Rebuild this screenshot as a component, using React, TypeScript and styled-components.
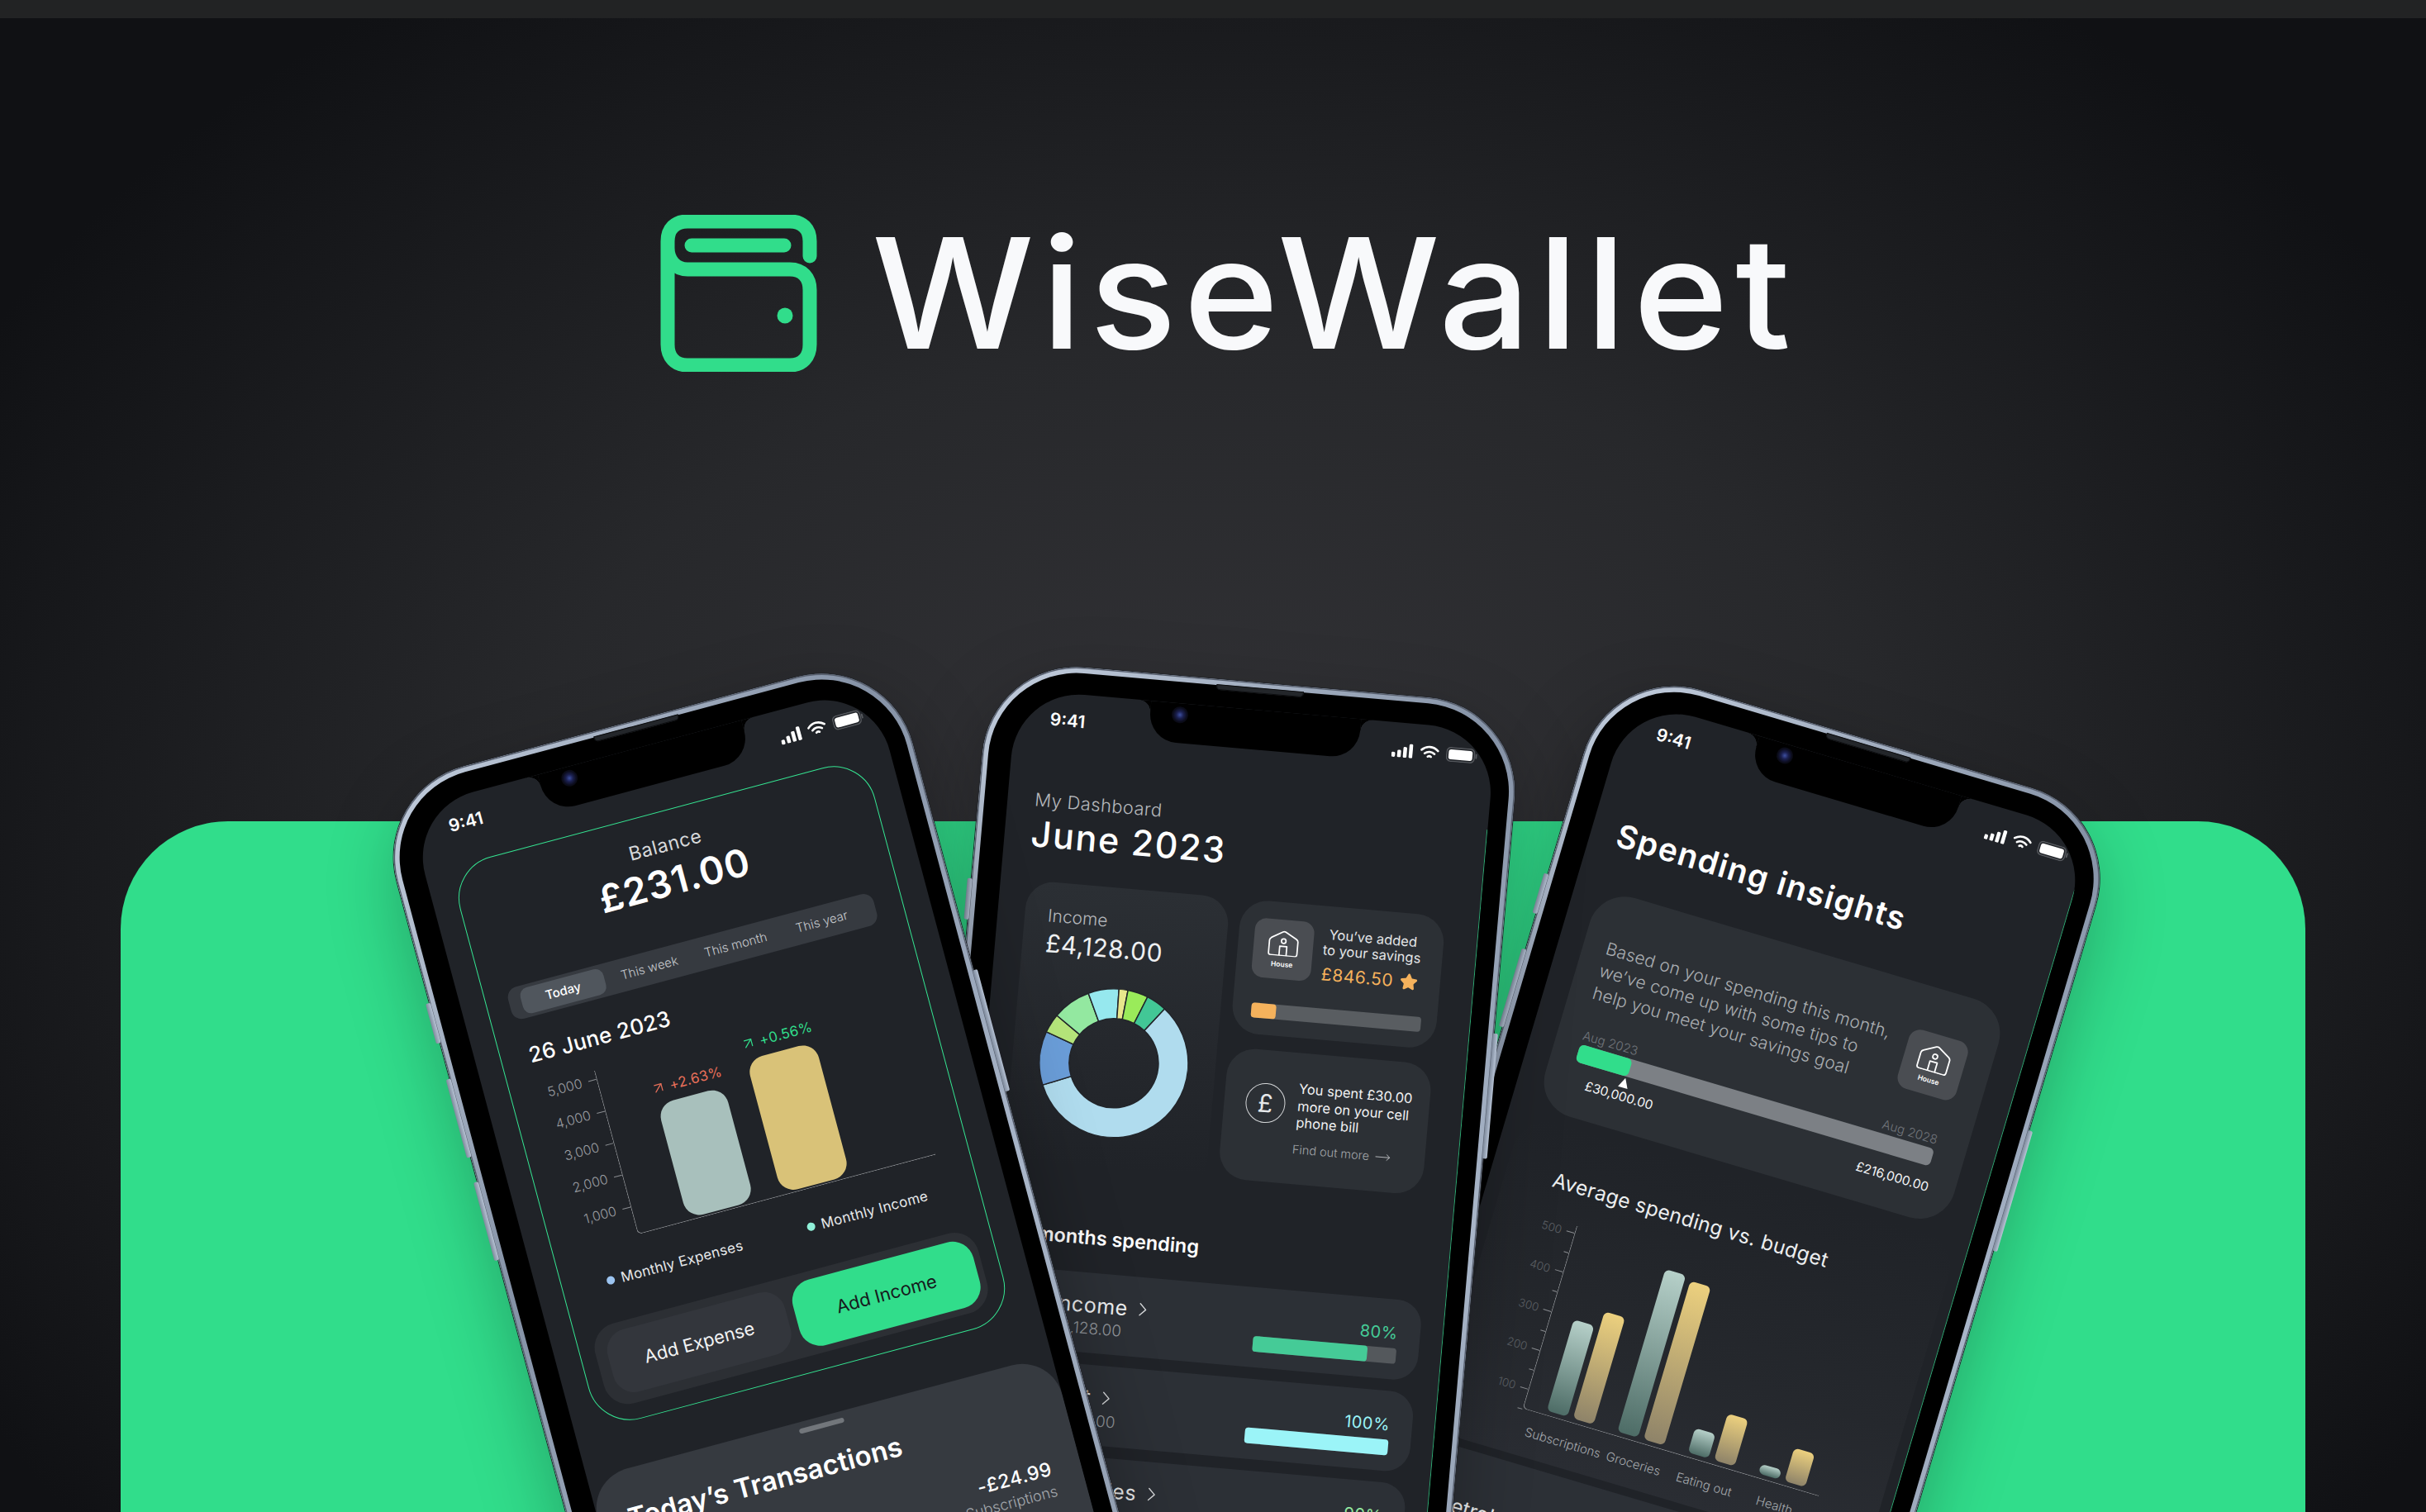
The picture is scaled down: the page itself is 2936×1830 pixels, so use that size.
import React from "react";
import styled, { createGlobalStyle } from "styled-components";
import { ArrowUpRight, ChevronRight, MoveRight, Star } from "lucide-react";

const Global = createGlobalStyle`
  html, body { margin: 0; padding: 0; background: #0f1012; }
  body { font-family: Inter, "Noto Sans", sans-serif; color: #fff; }
  * { box-sizing: border-box; }
`;

const Page = styled.div`
  position: relative;
  width: 2936px;
  height: 1830px;
  overflow: hidden;
  background: radial-gradient(ellipse 1720px 1300px at 50% 58%, #343438 0%, #27282b 50%, #101114 100%);
  display: flex;
  flex-direction: column;
`;
const TopBar = styled.div`
  height: 22px;
  background: #222324;
  flex: none;
`;
const Header = styled.header`
  display: flex;
  justify-content: center;
  align-items: center;
  gap: 66px;
  height: 190px;
  margin-top: 238px;
  padding-right: 20px;
  flex: none;
`;
const Wordmark = styled.h1`
  margin: 0;
  font: 500 186px/190px Inter, sans-serif;
  letter-spacing: 8px;
  color: #f8f9fb;
  transform: scaleX(1.055);
  transform-origin: 0 50%;
`;
const Panel = styled.div`
  flex: 1;
  margin: 544px 146px 0;
  background: #31dd8b;
  border-radius: 130px 130px 0 0;
`;

const PhoneFrame = styled.div<{ $x: number; $y: number; $angle: number; $z: number }>`
  position: absolute;
  left: ${(p) => p.$x}px;
  top: ${(p) => p.$y}px;
  z-index: ${(p) => p.$z};
  width: 646px;
  height: 1500px;
  transform-origin: 0 0;
  transform: rotate(${(p) => p.$angle}deg);
  padding: 7px;
  border-radius: 114px;
  background: linear-gradient(135deg, #c3cede 0%, #8592a6 30%, #a9b6c9 60%, #7d899b 100%);
  box-shadow: inset 0 0 0 1.5px #596170, 0 0 0 1px #23262c, 0 30px 90px rgba(0, 0, 0, 0.28);
`;
const Bezel = styled.div`
  width: 100%;
  height: 100%;
  background: #000;
  border-radius: 107px;
  padding: 26px 22px 25px 28px;
`;
const Speaker = styled.div`
  position: absolute;
  left: 275px;
  top: 6px;
  width: 106px;
  height: 7px;
  border-radius: 0 0 5px 5px;
  background: #23262a;
  box-shadow: inset 0 0 0 1px #0c0d0f;
`;
const SideButton = styled.div<{ $side: "left" | "right"; $top: number; $h: number }>`
  position: absolute;
  ${(p) => p.$side}: -5px;
  top: ${(p) => p.$top}px;
  width: 6px;
  height: ${(p) => p.$h}px;
  background: linear-gradient(90deg, #7d899b, #b7c3d5);
  border-radius: 2px;
`;
const Screen = styled.div<{ $edge?: number }>`
  position: relative;
  width: 100%;
  height: 100%;
  background: #202328;
  border-radius: 82px;
  overflow: hidden;
  display: flex;
  flex-direction: column;
  &::after {
    content: "";
    display: ${(p) => (p.$edge ? "block" : "none")};
    position: absolute;
    right: 0;
    top: ${(p) => p.$edge}px;
    bottom: 0;
    width: 1.5px;
    background: #2fd98a;
    opacity: 0.75;
  }
`;
const Notch = styled.div`
  position: absolute;
  left: 163px;
  top: 0;
  width: 255px;
  height: 48px;
  background: #000;
  border-radius: 0 0 34px 34px;
  z-index: 5;
  &::before, &::after {
    content: "";
    position: absolute;
    top: 0;
    width: 14px;
    height: 14px;
  }
  &::before {
    left: -14px;
    background: radial-gradient(circle at 0 100%, transparent 13.5px, #000 14px);
  }
  &::after {
    right: -14px;
    background: radial-gradient(circle at 100% 100%, transparent 13.5px, #000 14px);
  }
`;
const Camera = styled.div`
  position: absolute;
  left: 26px;
  top: 4px;
  width: 20px;
  height: 20px;
  border-radius: 50%;
  background: radial-gradient(circle, #3d4fa0 0%, #1b2050 30%, #0b0c1a 60%, #050507 100%);
`;
const StatusBar = styled.div`
  flex: none;
  height: 66px;
  display: flex;
  align-items: center;
  justify-content: space-between;
  padding: 0 20px 0 43px;
`;
const Time = styled.span`
  font: 600 21px/24px Inter, sans-serif;
`;
const StatusIcons = styled.div`
  display: flex;
  align-items: center;
  gap: 8px;
`;

const Status = () => (
  <StatusBar>
    <Time>9:41</Time>
    <StatusIcons>
      <svg width="26" height="18" viewBox="0 0 26 18" fill="#fff">
        <rect x="0" y="12" width="4.5" height="6" rx="1.5" />
        <rect x="7" y="9" width="4.5" height="9" rx="1.5" />
        <rect x="14" y="5" width="4.5" height="13" rx="1.5" />
        <rect x="21" y="1" width="4.5" height="17" rx="1.5" />
      </svg>
      <svg width="24" height="18" viewBox="0 0 24 18" fill="none" stroke="#fff" strokeLinecap="round" strokeWidth="2.6">
        <path d="M2 6.5C8 1 16 1 22 6.5" />
        <path d="M6 10.5C9.5 7.5 14.5 7.5 18 10.5" />
        <path d="M10 14.2C11.2 13.2 12.8 13.2 14 14.2" />
      </svg>
      <svg width="38" height="18" viewBox="0 0 38 18">
        <rect x="0.75" y="0.75" width="33.5" height="16.5" rx="5" fill="none" stroke="#55585d" strokeWidth="1.5" />
        <rect x="3" y="3" width="29" height="12" rx="3" fill="#fff" />
        <rect x="35.5" y="6" width="2" height="6" rx="1" fill="#55585d" />
      </svg>
    </StatusIcons>
  </StatusBar>
);

const Phone = ({ x, y, angle, z, edge, children }: any) => (
  <PhoneFrame $x={x} $y={y} $angle={angle} $z={z}>
    <SideButton $side="left" $top={266} $h={50} />
    <SideButton $side="left" $top={361} $h={98} />
    <SideButton $side="left" $top={490} $h={98} />
    <SideButton $side="right" $top={398} $h={152} />
    <Speaker />
    <Bezel>
      <Screen $edge={edge}>
        <Notch>
          <Camera />
        </Notch>
        <Status />
        {children}
      </Screen>
    </Bezel>
  </PhoneFrame>
);

/* left phone */
const BalanceCard = styled.section`
  flex: none;
  margin: 15px 0 0 30px;
  width: 520px;
  height: 704px;
  border: 1.5px solid #35e592;
  border-radius: 52px;
  display: flex;
  flex-direction: column;
`;
const BalanceLabel = styled.div`
  margin-top: 26px;
  text-align: center;
  font: 400 23px/28px Inter, sans-serif;
  color: #d6d8da;
  letter-spacing: 0.5px;
`;
const BalanceValue = styled.div`
  margin-top: 2px;
  text-align: center;
  font: 600 46px/56px Inter, sans-serif;
  letter-spacing: 1px;
`;
const Tabs = styled.div`
  margin: 47px 0 0 27px;
  width: 458px;
  height: 40px;
  padding: 0 13px;
  display: grid;
  grid-template-columns: repeat(4, 108px);
  align-items: center;
  justify-items: center;
  background: #363a40;
  border-radius: 13px;
`;
const Tab = styled.div<{ $active?: boolean }>`
  width: 104px;
  height: 32px;
  border-radius: 10px;
  font: ${(p) => (p.$active ? 500 : 300)} 15px/32px Inter, sans-serif;
  text-align: center;
  color: ${(p) => (p.$active ? "#fff" : "#c5c8cc")};
  background: ${(p) => (p.$active ? "#50565d" : "transparent")};
`;
const DateLine = styled.div`
  margin: 29px 0 0 34px;
  font: 500 26px/32px Inter, sans-serif;
  letter-spacing: 0.3px;
`;
const ChartRow = styled.div`
  margin: 12px 0 0 0;
  height: 215px;
  display: flex;
`;
const YAxis = styled.div<{ $w: number; $row: number }>`
  flex: none;
  width: ${(p) => p.$w}px;
  display: flex;
  flex-direction: column;
  & > div {
    height: ${(p) => p.$row}px;
  }
`;
const YTick = styled.div<{ $size: number; $color: string; $gap: number }>`
  display: flex;
  align-items: center;
  justify-content: flex-end;
  gap: ${(p) => p.$gap}px;
  font: 300 ${(p) => p.$size}px/20px Inter, sans-serif;
  color: ${(p) => p.$color};
  &::after {
    content: "";
    width: 10px;
    height: 1px;
    background: #8a8d91;
  }
`;
const Plot = styled.div<{ $top: number; $w: number; $h: number; $pad: number; $gap: number; $bottom: number }>`
  flex: none;
  margin-top: ${(p) => p.$top}px;
  width: ${(p) => p.$w}px;
  height: ${(p) => p.$h}px;
  padding: 0 0 ${(p) => p.$bottom}px ${(p) => p.$pad}px;
  border-left: 1px solid #8a8d91;
  border-bottom: 1px solid #8a8d91;
  border-bottom-left-radius: 6px;
  display: flex;
  align-items: flex-end;
  gap: ${(p) => p.$gap}px;
`;
const BarColumn = styled.div`
  display: flex;
  flex-direction: column;
  align-items: center;
  gap: 8px;
`;
const Trend = styled.div<{ $color: string }>`
  display: flex;
  align-items: center;
  gap: 4px;
  height: 22px;
  white-space: nowrap;
  font: 400 17px/22px Inter, sans-serif;
  letter-spacing: 0.3px;
  color: ${(p) => p.$color};
`;
const SolidBar = styled.div<{ $h: number; $w: number; $color: string }>`
  width: ${(p) => p.$w}px;
  height: ${(p) => p.$h}px;
  background: ${(p) => p.$color};
  border-radius: 20px;
`;
const Legend = styled.div`
  margin: 33px 0 0 54px;
  width: 402px;
  display: flex;
  justify-content: space-between;
`;
const LegendItem = styled.div<{ $color: string }>`
  display: flex;
  align-items: center;
  gap: 8px;
  font: 400 17px/24px Inter, sans-serif;
  color: #e6e8ea;
  letter-spacing: 0.3px;
  &::before {
    content: "";
    width: 10px;
    height: 10px;
    border-radius: 50%;
    background: ${(p) => p.$color};
  }
`;
const ActionBar = styled.div`
  margin: 39px 0 0 18px;
  width: 480px;
  height: 100px;
  padding: 10px 8px 10px 14px;
  background: #2c2f34;
  border-radius: 30px;
  display: flex;
  gap: 10px;
`;
const ActionButton = styled.div<{ $primary?: boolean }>`
  flex: none;
  width: ${(p) => (p.$primary ? 226 : 222)}px;
  height: ${(p) => (p.$primary ? 82 : 78)}px;
  border-radius: 26px;
  display: flex;
  align-items: center;
  justify-content: center;
  font: 400 22px/26px Inter, sans-serif;
  color: ${(p) => (p.$primary ? "#16191c" : "#f2f3f4")};
  background: ${(p) => (p.$primary ? "#31dd8b" : "#33363c")};
`;
const Sheet = styled.section`
  flex: none;
  margin-top: 54px;
  height: 400px;
  background: #363a40;
  border-radius: 50px 50px 0 0;
  display: flex;
  flex-direction: column;
  padding: 8px 36px 0;
`;
const Handle = styled.div`
  flex: none;
  align-self: center;
  width: 56px;
  height: 6px;
  border-radius: 3px;
  background: #72767b;
`;
const SheetTitle = styled.h2`
  margin: 25px 0 0;
  font: 600 33px/40px Inter, sans-serif;
  letter-spacing: 0.2px;
`;
const Amount = styled.div`
  margin-top: 39px;
  align-self: flex-end;
  text-align: right;
  font: 500 23px/30px Inter, sans-serif;
  letter-spacing: 0.5px;
`;
const AmountNote = styled.div`
  align-self: flex-end;
  font: 300 18px/26px Inter, sans-serif;
  color: #a4a8ad;
`;

/* middle phone */
const Eyebrow = styled.div`
  margin: 52px 0 0 33px;
  font: 300 22px/26px Inter, sans-serif;
  color: #b5b8bc;
  letter-spacing: 0.4px;
`;
const Heading = styled.h2`
  margin: 2px 0 0 32px;
  font: 500 43px/52px Inter, sans-serif;
  letter-spacing: 1.8px;
`;
const CardGrid = styled.div`
  margin: 31px 0 0 33px;
  width: 508px;
  height: 339px;
  display: grid;
  grid-template-columns: 246px 248px;
  column-gap: 14px;
`;
const IncomeCard = styled.div`
  border-radius: 34px 34px 0 0;
  background: linear-gradient(180deg, #2b2f34 0%, #25282d 55%, #202328 100%);
  padding: 28px 0 0 28px;
`;
const IncomeLabel = styled.div`
  font: 300 21px/26px Inter, sans-serif;
  color: #b5b8bc;
`;
const IncomeValue = styled.div`
  margin-top: 2px;
  font: 400 30px/36px Inter, sans-serif;
  letter-spacing: 0.6px;
  color: #eef0f1;
`;
const DonutBox = styled.div`
  margin: 30px 0 0 5px;
  width: 180px;
  height: 180px;
`;
const SideCards = styled.div`
  display: flex;
  flex-direction: column;
  gap: 18px;
`;
const SavingsCard = styled.div`
  flex: none;
  height: 162px;
  padding: 21px 14px 0 19px;
  background: #2c3035;
  border-radius: 34px;
`;
const SavingsTop = styled.div`
  display: flex;
`;
const HouseTile = styled.div<{ $size: number }>`
  flex: none;
  width: ${(p) => p.$size}px;
  height: ${(p) => p.$size}px;
  border-radius: 14px;
  background: #4a4d52;
  display: flex;
  flex-direction: column;
  align-items: center;
  justify-content: center;
  gap: 5px;
`;
const HouseLabel = styled.span`
  font: 600 8.5px/10px Inter, sans-serif;
  color: #fff;
`;
const SavingsText = styled.div`
  flex: 1;
  padding-top: 4px;
  text-align: center;
  font: 400 16.5px/19px Inter, sans-serif;
  color: #e3e5e7;
`;
const SavedAmount = styled.div`
  margin-top: 7px;
  display: flex;
  align-items: center;
  justify-content: center;
  gap: 8px;
  font: 400 21px/26px Inter, sans-serif;
  letter-spacing: 0.6px;
  color: #f5b25c;
`;
const Meter = styled.div<{ $h: number; $w: number; $bg: string; $r: number }>`
  position: relative;
  width: ${(p) => p.$w}px;
  height: ${(p) => p.$h}px;
  background: ${(p) => p.$bg};
  border-radius: ${(p) => p.$r}px;
`;
const MeterFill = styled.div<{ $w: number; $color: string; $r: number }>`
  width: ${(p) => p.$w}px;
  height: 100%;
  background: ${(p) => p.$color};
  border-radius: ${(p) => p.$r}px;
`;
const SavingsMeter = styled.div`
  margin: 28px 0 0 4px;
`;
const SpentCard = styled.div`
  flex: 1;
  padding: 33px 20px 0 26px;
  background: #2c3035;
  border-radius: 34px;
`;
const SpentTop = styled.div`
  display: flex;
  align-items: center;
  gap: 15px;
`;
const PoundBadge = styled.div`
  flex: none;
  width: 48px;
  height: 48px;
  border: 1.5px solid #d4d6d8;
  border-radius: 50%;
  display: flex;
  align-items: center;
  justify-content: center;
  font: 400 30px/1 Inter, sans-serif;
  color: #e6e8ea;
`;
const SpentText = styled.div`
  font: 400 16.5px/20.5px Inter, sans-serif;
  color: #f0f1f2;
  white-space: nowrap;
`;
const FindMore = styled.div`
  margin-top: 12px;
  padding-left: 40px;
  display: flex;
  justify-content: center;
  align-items: center;
  gap: 6px;
  font: 300 14.5px/20px Inter, sans-serif;
  color: #a3a6aa;
`;
const SectionTitle = styled.h3`
  margin: 71px 0 0 27px;
  font: 600 23.5px/30px Inter, sans-serif;
  white-space: nowrap;
`;
const SpendRows = styled.div`
  margin: 27px 0 0 22px;
  width: 532px;
  display: flex;
  flex-direction: column;
  gap: 14px;
`;
const SpendRow = styled.div`
  height: 97px;
  padding: 24px 27px 0 86px;
  background: #2c3036;
  border-radius: 30px;
  display: flex;
  justify-content: space-between;
`;
const RowName = styled.div`
  display: flex;
  align-items: center;
  gap: 4px;
  font: 400 25px/30px Inter, sans-serif;
  letter-spacing: 0.6px;
  color: #eceeef;
`;
const RowAmount = styled.div`
  margin-top: 2px;
  font: 300 19px/24px Inter, sans-serif;
  color: #93979c;
`;
const RowMeter = styled.div`
  margin-top: 5px;
  width: 174px;
  display: flex;
  flex-direction: column;
  gap: 6px;
`;
const Percent = styled.div<{ $color: string }>`
  text-align: right;
  font: 400 20px/24px Inter, sans-serif;
  letter-spacing: 0.5px;
  color: ${(p) => p.$color};
`;

/* right phone */
const InsightTitle = styled.h2`
  margin: 74px 0 0 32px;
  font: 600 39px/46px Inter, sans-serif;
  letter-spacing: 1.5px;
  white-space: nowrap;
`;
const TipsCard = styled.section`
  flex: none;
  margin: 45px 0 0 30px;
  width: 516px;
  height: 276px;
  padding: 54px 32px 0 28px;
  background: #2c3035;
  border-radius: 44px;
`;
const TipsTop = styled.div`
  display: flex;
  justify-content: space-between;
`;
const TipsText = styled.div`
  font: 300 21px/28px Inter, sans-serif;
  letter-spacing: 0.2px;
  color: #a9adb1;
  white-space: nowrap;
`;
const GoalLabels = styled.div`
  margin: 29px 6px 0 3px;
  display: flex;
  justify-content: space-between;
  font: 300 15px/20px Inter, sans-serif;
  color: #70747a;
`;
const GoalMeter = styled.div`
  margin: 1px 0 0 3px;
`;
const Pointer = styled.div<{ $left: number }>`
  position: absolute;
  left: ${(p) => p.$left}px;
  top: 24px;
  width: 0;
  height: 0;
  border-left: 6px solid transparent;
  border-right: 6px solid transparent;
  border-bottom: 12px solid #fff;
`;
const GoalValues = styled.div`
  margin: 14px 0 0 23px;
  display: flex;
  justify-content: space-between;
  font: 400 15.5px/22px Inter, sans-serif;
  color: #f3f4f5;
`;
const BudgetPanel = styled.section`
  flex: none;
  margin: 11px 0 0 18px;
  width: 550px;
  height: 400px;
  padding: 51px 0 0 0;
  border-radius: 44px;
  background: linear-gradient(180deg, #202328 0%, #25282d 60%, #2a2d33 100%);
`;
const BudgetTitle = styled.h3`
  margin: 0 0 0 58px;
  font: 400 24.5px/32px Inter, sans-serif;
  letter-spacing: 0.3px;
  color: #eceeef;
  white-space: nowrap;
`;
const BudgetChart = styled.div`
  margin: 15px 0 0 51px;
  height: 246px;
  display: flex;
`;
const MinorTick = styled(YTick)`
  position: relative;
  &::before {
    content: "";
    position: absolute;
    right: 0;
    top: 100%;
    width: 6px;
    height: 1px;
    background: #8a8d91;
  }
`;
const BarPair = styled.div`
  display: flex;
  align-items: flex-end;
  gap: 7px;
`;
const GradientBar = styled.div<{ $h: number; $kind: "a" | "b" }>`
  width: 26px;
  height: ${(p) => p.$h}px;
  border-radius: 6px;
  background: ${(p) =>
    p.$kind === "a"
      ? "linear-gradient(180deg, #b6d0c9 0%, #4d6c66 100%)"
      : "linear-gradient(180deg, #ecd07e 0%, #8e8369 100%)"};
`;
const XLabels = styled.div`
  margin: 16px 0 0 115px;
  display: grid;
  grid-template-columns: repeat(4, 89px);
  justify-items: center;
  font: 300 15px/20px Inter, sans-serif;
  color: #a2a6aa;
  white-space: nowrap;
`;
const PetrolRow = styled.div`
  flex: none;
  margin: 10px 0 0 18px;
  width: 530px;
  height: 120px;
  padding: 55px 0 0 36px;
  background: #2c3036;
  border-radius: 30px;
  font: 400 25px/30px Inter, sans-serif;
  color: #eceeef;
`;

const Logo = () => (
  <svg width="190" height="190" viewBox="0 0 190 190" fill="none" stroke="#31dd8b" strokeWidth="17" strokeLinecap="round" strokeLinejoin="round">
    <path d="M181 50V32C181 17 172 8 157 8H33C18 8 9 17 9 32V157C9 172 18 182 33 182H157C172 182 181 172 181 157V91C181 76 172 66 157 66H33C18 66 9 54 9 40" />
    <path d="M38 37H150" />
    <circle cx="151" cy="122" r="9.5" fill="#31dd8b" stroke="none" />
  </svg>
);

const HouseIcon = ({ w }: { w: number }) => (
  <svg width={w} height={w * 0.84} viewBox="0 0 44 37" fill="none" stroke="#fff" strokeWidth="2" strokeLinejoin="round">
    <path d="M2 32V15C2 13 3 12 4.5 11L20 2.2C21.5 1.4 22.5 1.4 24 2.2L39.5 11C41 12 42 13 42 15V32C42 34 41 35.5 39 35.5H5C3 35.5 2 34 2 32Z" />
    <path d="M17 35.5V22.5H27V35.5" />
    <circle cx="22" cy="15" r="3.2" />
  </svg>
);

const polar = (r: number, a: number): [number, number] => {
  const t = ((a - 90) * Math.PI) / 180;
  return [90 + r * Math.cos(t), 90 + r * Math.sin(t)];
};
const arc = (a0: number, a1: number) => {
  const R = 90;
  const r = 54;
  const [x0, y0] = polar(R, a0);
  const [x1, y1] = polar(R, a1);
  const [x2, y2] = polar(r, a1);
  const [x3, y3] = polar(r, a0);
  const large = a1 - a0 > 180 ? 1 : 0;
  return `M${x0} ${y0}A${R} ${R} 0 ${large} 1 ${x1} ${y1}L${x2} ${y2}A${r} ${r} 0 ${large} 0 ${x3} ${y3}Z`;
};
const slices: [number, number, string][] = [
  [38, 248, "#b0dcee"],
  [248, 290, "#6a9dd8"],
  [290, 305, "#b5e57a"],
  [305, 335, "#93e8a0"],
  [335, 359, "#96e8ee"],
  [359, 366, "#e8e68c"],
  [366, 382, "#9aeb5a"],
  [382, 398, "#42c796"],
];
const Donut = () => (
  <svg width="180" height="180" viewBox="0 0 180 180">
    {slices.map(([a, b, c]) => (
      <path key={a} d={arc(a, b)} fill={c} stroke="#22252a" strokeWidth="1.5" />
    ))}
  </svg>
);

const rows = [
  { name: "Income", amount: "£4,128.00", pct: "80%", color: "#45cb97", w: 139 },
  { name: "Rent", amount: "£1,200.00", pct: "100%", color: "#9bf4f8", w: 174 },
  { name: "Groceries", amount: "£320.00", pct: "90%", color: "#93e8a0", w: 156 },
];
const pairs = [
  [115, 135],
  [205, 200],
  [31, 59],
  [12, 42],
];

export default function App() {
  return (
    <Page>
      <Global />
      <TopBar />
      <Header>
        <Logo />
        <Wordmark>WiseWallet</Wordmark>
      </Header>
      <Panel />

      <Phone x={1948.8} y={803.4} angle={16.5} z={1} edge={70}>
        <InsightTitle>Spending insights</InsightTitle>
        <TipsCard>
          <TipsTop>
            <TipsText>
              Based on your spending this month,
              <br />
              we’ve come up with some tips to
              <br />
              help you meet your savings goal
            </TipsText>
            <HouseTile $size={74}>
              <HouseIcon w={40} />
              <HouseLabel>House</HouseLabel>
            </HouseTile>
          </TipsTop>
          <GoalLabels>
            <span>Aug 2023</span>
            <span>Aug 2028</span>
          </GoalLabels>
          <GoalMeter>
            <Meter $w={447} $h={22} $bg="#7c8085" $r={6}>
              <MeterFill $w={66} $color="#31dd8b" $r={6} />
              <Pointer $left={58} />
            </Meter>
          </GoalMeter>
          <GoalValues>
            <span>£30,000.00</span>
            <span>£216,000.00</span>
          </GoalValues>
        </TipsCard>
        <BudgetPanel>
          <BudgetTitle>Average spending vs. budget</BudgetTitle>
          <BudgetChart>
            <YAxis $w={50} $row={50}>
              {["500", "400", "300", "200", "100"].map((t) => (
                <MinorTick key={t} $size={13.5} $color="#5c6065" $gap={6}>
                  {t}
                </MinorTick>
              ))}
            </YAxis>
            <Plot $top={15} $w={374} $h={231} $pad={28} $gap={30} $bottom={5}>
              {pairs.map(([a, b]) => (
                <BarPair key={a}>
                  <GradientBar $h={a} $kind="a" />
                  <GradientBar $h={b} $kind="b" />
                </BarPair>
              ))}
            </Plot>
          </BudgetChart>
          <XLabels>
            <span>Subscriptions</span>
            <span>Groceries</span>
            <span>Eating out</span>
            <span>Health</span>
          </XLabels>
        </BudgetPanel>
        <PetrolRow>Petrol</PetrolRow>
      </Phone>

      <Phone x={1198.5} y={797.8} angle={5} z={2} edge={120}>
        <Eyebrow>My Dashboard</Eyebrow>
        <Heading>June 2023</Heading>
        <CardGrid>
          <IncomeCard>
            <IncomeLabel>Income</IncomeLabel>
            <IncomeValue>£4,128.00</IncomeValue>
            <DonutBox>
              <Donut />
            </DonutBox>
          </IncomeCard>
          <SideCards>
            <SavingsCard>
              <SavingsTop>
                <HouseTile $size={72}>
                  <HouseIcon w={38} />
                  <HouseLabel>House</HouseLabel>
                </HouseTile>
                <SavingsText>
                  You’ve added
                  <br />
                  to your savings
                  <SavedAmount>
                    £846.50
                    <Star size={22} fill="#f5b25c" stroke="#f5b25c" />
                  </SavedAmount>
                </SavingsText>
              </SavingsTop>
              <SavingsMeter>
                <Meter $w={206} $h={18} $bg="#595d61" $r={4}>
                  <MeterFill $w={30} $color="#f5b25c" $r={4} />
                </Meter>
              </SavingsMeter>
            </SavingsCard>
            <SpentCard>
              <SpentTop>
                <PoundBadge>£</PoundBadge>
                <SpentText>
                  You spent £30.00
                  <br />
                  more on your cell
                  <br />
                  phone bill
                </SpentText>
              </SpentTop>
              <FindMore>
                Find out more
                <MoveRight size={20} strokeWidth={1} color="#c9cbce" />
              </FindMore>
            </SpentCard>
          </SideCards>
        </CardGrid>
        <SectionTitle>Last months spending</SectionTitle>
        <SpendRows>
          {rows.map((r) => (
            <SpendRow key={r.name}>
              <div>
                <RowName>
                  {r.name}
                  <ChevronRight size={28} strokeWidth={1.2} color="#d5d7d9" />
                </RowName>
                <RowAmount>{r.amount}</RowAmount>
              </div>
              <RowMeter>
                <Percent $color={r.color}>{r.pct}</Percent>
                <Meter $w={174} $h={19} $bg="#54585c" $r={4}>
                  <MeterFill $w={r.w} $color={r.color} $r={4} />
                </Meter>
              </RowMeter>
            </SpendRow>
          ))}
        </SpendRows>
      </Phone>

      <Phone x={450.5} y={957} angle={-15} z={3}>
        <BalanceCard>
          <BalanceLabel>Balance</BalanceLabel>
          <BalanceValue>£231.00</BalanceValue>
          <Tabs>
            <Tab $active>Today</Tab>
            <Tab>This week</Tab>
            <Tab>This month</Tab>
            <Tab>This year</Tab>
          </Tabs>
          <DateLine>26 June 2023</DateLine>
          <ChartRow>
            <YAxis $w={105} $row={40}>
              {["5,000", "4,000", "3,000", "2,000", "1,000"].map((t) => (
                <YTick key={t} $size={16} $color="#9a9da1" $gap={8}>
                  {t}
                </YTick>
              ))}
            </YAxis>
            <Plot $top={10} $w={373} $h={205} $pad={59} $gap={30} $bottom={2}>
              <BarColumn>
                <Trend $color="#e8705a">
                  <ArrowUpRight size={20} strokeWidth={1.5} />
                  +2.63%
                </Trend>
                <SolidBar $w={84} $h={143} $color="#a8c0bc" />
              </BarColumn>
              <BarColumn>
                <Trend $color="#31dd8b">
                  <ArrowUpRight size={20} strokeWidth={1.5} />
                  +0.56%
                </Trend>
                <SolidBar $w={86} $h={167} $color="#d9c278" />
              </BarColumn>
            </Plot>
          </ChartRow>
          <Legend>
            <LegendItem $color="#9cc4f0">Monthly Expenses</LegendItem>
            <LegendItem $color="#8ff0d8">Monthly Income</LegendItem>
          </Legend>
          <ActionBar>
            <ActionButton>Add Expense</ActionButton>
            <ActionButton $primary>Add Income</ActionButton>
          </ActionBar>
        </BalanceCard>
        <Sheet>
          <Handle />
          <SheetTitle>Today’s Transactions</SheetTitle>
          <Amount>-£24.99</Amount>
          <AmountNote>Subscriptions</AmountNote>
        </Sheet>
      </Phone>
    </Page>
  );
}
